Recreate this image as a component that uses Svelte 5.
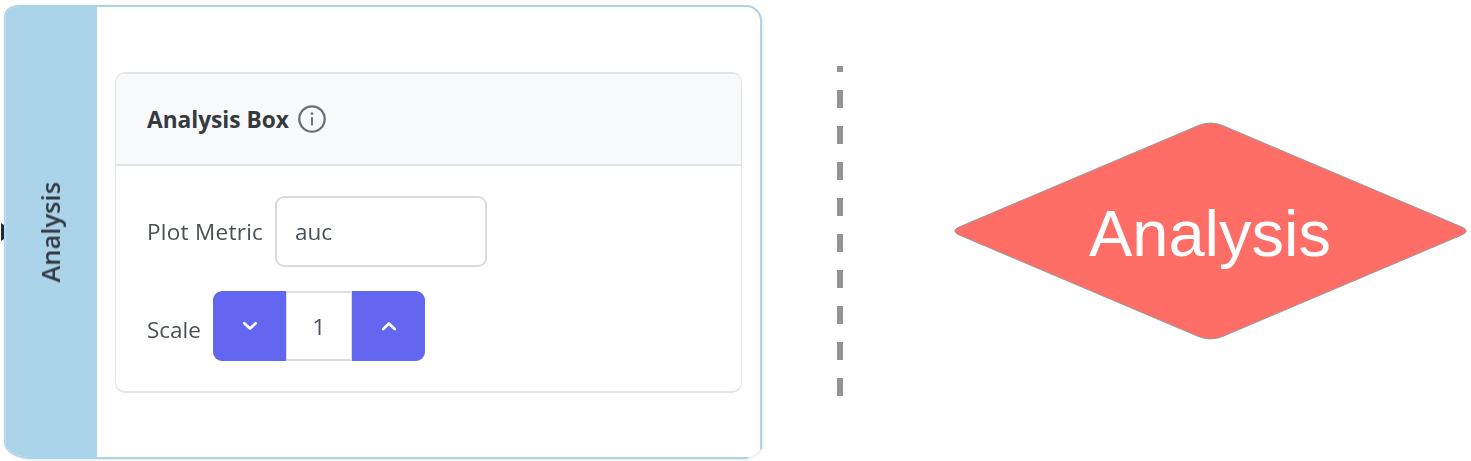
<script>
  let metric = $state('auc');
  let scale = $state(1);
</script>

<main>
  <section class="node">
    <i class="port"></i>
    <div class="frame">
      <aside><span>Analysis</span></aside>
      <div class="content">
        <article>
          <header>
            <h2>Analysis Box</h2>
            <svg class="info" viewBox="0 0 28 28" width="28" height="28">
              <circle cx="14" cy="14" r="12.7" fill="none" stroke="#6b6e76" stroke-width="2.3" />
              <path d="M14 12.1v8.4" stroke="#6b6e76" stroke-width="1.9" />
              <circle cx="14" cy="8.7" r="1.35" fill="#6b6e76" />
            </svg>
          </header>
          <div class="body">
            <div class="row">
              <span class="label plot">Plot Metric</span>
              <div class="field">{metric}</div>
            </div>
            <div class="row second">
              <span class="label scale">Scale</span>
              <div class="stepper">
                <button class="down" aria-label="Decrease" onclick={() => scale--}>
                  <svg viewBox="0 0 16 10" width="16" height="10"><path d="M2.3 2.2L8 7.6l5.7-5.4" /></svg>
                </button>
                <span class="value">{scale}</span>
                <button class="up" aria-label="Increase" onclick={() => scale++}>
                  <svg viewBox="0 0 16 10" width="16" height="10"><path d="M2.3 8L8 2.6 13.7 8" /></svg>
                </button>
              </div>
            </div>
          </div>
        </article>
      </div>
    </div>
  </section>
  <div class="divider"></div>
  <svg class="diamond" viewBox="950 115 521 232" width="521" height="232">
    <path
      d="M1198 125.7Q1210.5 120.4 1223 125.7L1461.3 226.8Q1471.1 231 1461.3 235.2L1223 336.3Q1210.5 341.6 1198 336.3L959.7 235.2Q949.9 231 959.7 226.8Z"
      fill="#ff6d67" stroke="#999" stroke-width="1" />
    <text x="1210" y="255.5" text-anchor="middle">Analysis</text>
  </svg>
</main>

<style>
  :global(body) { background: #fff; overflow: hidden; }
  main {
    display: flex;
    width: 1471px;
    height: 461px;
    background: #fff;
    font-family: "Open Sans", "Noto Sans", sans-serif;
    color: #495057;
  }
  .node {
    position: relative;
    flex: none;
    width: 759px;
    height: 455px;
    margin: 5px 0 0 4px;
    filter: drop-shadow(1px 1px 1px #d3d9de90);
  }
  .port {
    position: absolute;
    left: -3px;
    top: 218px;
    width: 3px;
    height: 18px;
    background: #24292b;
    clip-path: polygon(0 0, 100% 2px, 100% 16px, 0 100%);
  }
  .frame {
    box-sizing: border-box;
    display: flex;
    width: 758px;
    height: 454px;
    border: 2px solid #abd4e9;
    border-left-width: 1px;
    border-radius: 14px 16px 0 28px / 12px 16px 0 16px;
    background: #fff;
    overflow: hidden;
    clip-path: polygon(0 0, 100% 0, 100% 443px, 752px 449px, 742px 100%, 0 100%);
  }
  aside {
    display: flex;
    align-items: center;
    justify-content: center;
    box-sizing: border-box;
    width: 91.5px;
    flex: none;
    background: #abd4ea;
    border-left: 1px solid #bfe0f1;
    padding-right: 3px;
    color: #343a40;
  }
  aside span {
    writing-mode: vertical-rl;
    transform: rotate(180deg);
    font-size: 25.5px;
    font-weight: 600;
    line-height: 34px;
  }
  .content { padding: 65px 18px 65px 18.5px; flex: 1; }
  article {
    box-sizing: border-box;
    width: 627px;
    height: 321px;
    border: 2px solid #e1e4e9;
    border-left-width: 1px;
    border-right-width: 1px;
    border-radius: 10px;
  }
  header {
    display: flex;
    align-items: center;
    box-sizing: border-box;
    height: 92px;
    padding-left: 31px;
    gap: 9px;
    background: #f8f9fb;
    border-bottom: 2px solid #e1e4e9;
    border-radius: 8px 8px 0 0;
  }
  h2 {
    margin: 0;
    padding-top: 2px;
    width: 142px;
    font-size: 22.7px;
    font-weight: 700;
    line-height: 32px;
    color: #343a40;
    white-space: nowrap;
  }
  .body { padding: 30px 31px; }
  .row { display: flex; align-items: center; font-size: 22.5px; }
  .second { margin-top: 24px; }
  .label { white-space: nowrap; }
  .plot { width: 128px; letter-spacing: 0.27px; }
  .scale { width: 66px; padding-top: 7px; }
  .field {
    box-sizing: border-box;
    width: 212px;
    height: 71px;
    padding-left: 18px;
    border: 2px solid #d7dce1;
    border-radius: 9px;
    line-height: 67px;
  }
  .stepper { display: flex; height: 70px; }
  button {
    display: flex;
    align-items: center;
    justify-content: center;
    width: 73px;
    padding: 0;
    border: 0;
    background: #6366f1;
  }
  button path {
    fill: none;
    stroke: #fff;
    stroke-width: 2.7;
    stroke-linecap: round;
    stroke-linejoin: round;
  }
  .down { border-radius: 9px 0 0 9px; }
  .up { border-radius: 0 9px 9px 0; }
  .value {
    box-sizing: border-box;
    width: 66px;
    border: 2px solid #dadfe4;
    border-left-width: 1px;
    border-right-width: 1px;
    text-align: center;
    line-height: 67px;
  }
  .divider {
    flex: none;
    width: 6px;
    height: 330px;
    margin: 66px 0 0 74px;
    background: repeating-linear-gradient(to top, #949494 0 18px, transparent 18px 36px);
  }
  .diamond { flex: none; margin: 115px 0 0 107px; }
  .diamond text {
    font: 65px "Liberation Sans", Arial, sans-serif;
    fill: #fff;
  }
</style>
